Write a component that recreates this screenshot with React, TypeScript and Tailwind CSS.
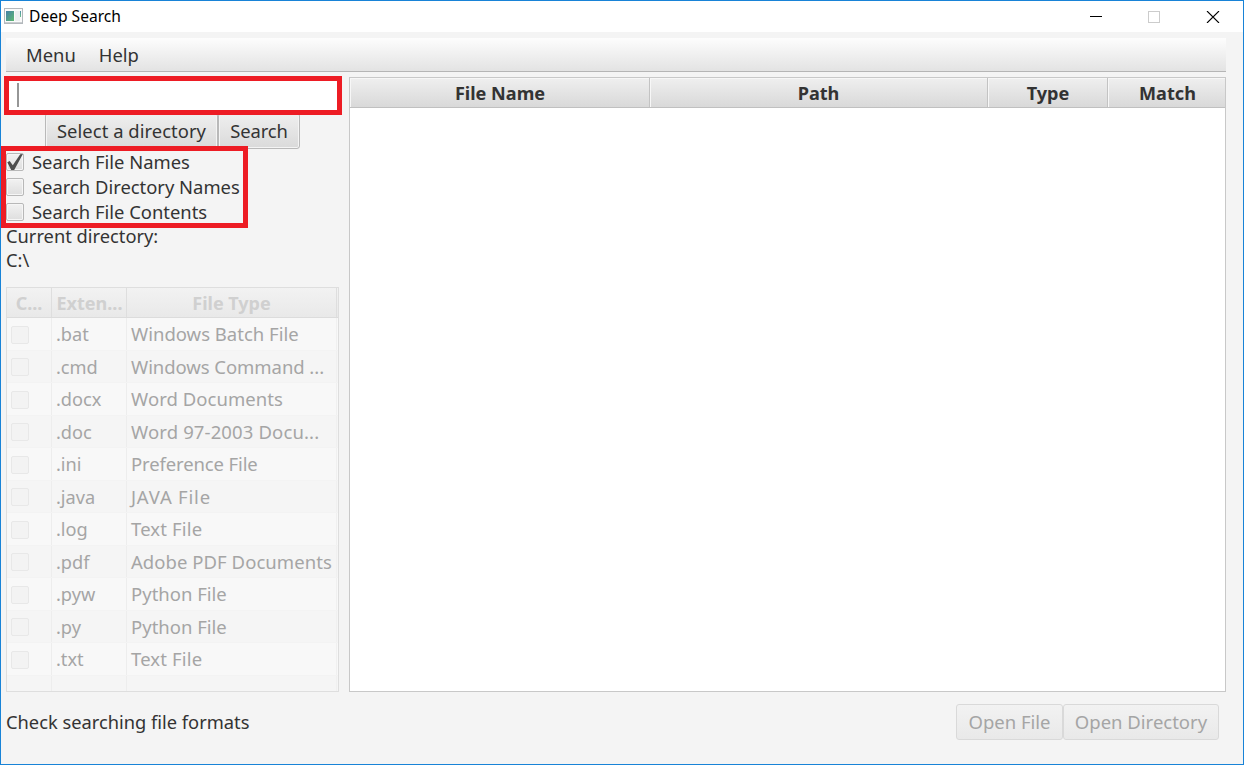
import React from "react";

const fileTypes = [
  { ext: ".bat", type: "Windows Batch File", fit: "" },
  { ext: ".cmd", type: "Windows Command ...", fit: "tracking-[-0.06px]" },
  { ext: ".docx", type: "Word Documents", fit: "tracking-[0.05px]" },
  { ext: ".doc", type: "Word 97-2003 Docu...", fit: "tracking-[0.13px]" },
  { ext: ".ini", type: "Preference File", fit: "tracking-[-0.13px]" },
  { ext: ".java", type: "JAVA File", fit: "tracking-[0.8px]" },
  { ext: ".log", type: "Text File", fit: "tracking-[0.15px]" },
  { ext: ".pdf", type: "Adobe PDF Documents", fit: "tracking-[0.05px]" },
  { ext: ".pyw", type: "Python File", fit: "" },
  { ext: ".py", type: "Python File", fit: "" },
  { ext: ".txt", type: "Text File", fit: "tracking-[0.15px]" },
];

function TitleBar() {
  return (
    <header className="flex h-[31px] shrink-0 items-center bg-white pl-[3px]">
      <svg width="19" height="16" viewBox="0 0 19 16" shapeRendering="crispEdges" className="mb-px">
        <defs>
          <linearGradient id="pane" x1="0" y1="0" x2="1" y2="1">
            <stop offset="0" stopColor="#4580a8" />
            <stop offset="1" stopColor="#5db870" />
          </linearGradient>
          <linearGradient id="strip" x1="0" y1="0" x2="0" y2="1">
            <stop offset="0" stopColor="#4c8fa8" />
            <stop offset="1" stopColor="#6cc08a" />
          </linearGradient>
        </defs>
        <rect x="0.5" y="0.5" width="18" height="15" fill="#fafafa" stroke="#b3b8bc" />
        <rect x="1" y="14" width="17" height="1" fill="#c9cdd0" />
        <rect x="2" y="3" width="8" height="10" fill="url(#pane)" />
        <rect x="11" y="3" width="5" height="10" fill="#eceef0" />
        <rect x="16" y="3" width="1" height="6" fill="url(#strip)" />
      </svg>
      <h1 className="mb-px ml-[6px] text-[15.6px] leading-[20px] text-black">Deep Search</h1>
      <div className="ml-auto flex items-center pr-[23px]">
        <svg width="130" height="12" viewBox="0 0 130 12" fill="none" className="block">
          <path d="M0 5.5H12" stroke="#000" />
          <rect x="58.5" y="0.5" width="11" height="11" stroke="#ccc" />
          <path d="M117 0L129 12M129 0L117 12" stroke="#000" strokeWidth="1.1" />
        </svg>
      </div>
    </header>
  );
}

function CheckBox({ label, checked = false }: { label: string; checked?: boolean }) {
  return (
    <label className="flex h-[25px] items-center">
      <span className="flex size-[18px] shrink-0 items-center justify-center rounded-[2px] border border-[#b8b8b8] bg-linear-to-b from-[#f2f2f2] to-[#dedede] shadow-[inset_0_0_0_1px_#f6f6f6]">
        {checked && (
          <svg width="18" height="18" viewBox="0 0 18 18" className="shrink-0">
            <path d="M1.3 9.2L3.7 8L6.8 12.3L14.2 1.2L16.9 1L8.2 17H5.2Z" fill="#4d4d4d" />
          </svg>
        )}
      </span>
      <span className="ml-[8px] leading-[25px] whitespace-nowrap">{label}</span>
    </label>
  );
}

function SearchPanel() {
  return (
    <section className="relative flex w-[333px] shrink-0 flex-col">
      <div className="flex h-[36px] w-[333px] items-center bg-white pl-[11px]">
        <span className="h-[24px] w-[2px] bg-[#969696]" />
      </div>
      <div className="flex h-[36px] pl-[39px]">
        <button className="h-full w-[173px] rounded-[3px] border border-[#b9b9b9] bg-linear-to-b from-[#efefef] to-[#dadada] tracking-[0.05px] whitespace-nowrap shadow-[inset_0_0_0_1px_#f4f4f4]">
          Select a directory
        </button>
        <button className="h-full w-[82px] rounded-[3px] border border-[#b9b9b9] bg-linear-to-b from-[#efefef] to-[#dadada] tracking-[-0.1px] shadow-[inset_0_0_0_1px_#f4f4f4]">
          Search
        </button>
      </div>
      <div className="flex flex-col">
        <CheckBox label="Search File Names" checked />
        <CheckBox label="Search Directory Names" />
        <CheckBox label="Search File Contents" />
      </div>
      <p className="h-[24px] text-[18.3px] leading-[24px]">Current directory:</p>
      <p className="h-[24px] text-[18.3px] leading-[24px]">C:\</p>
      <FileTypeTable />
      <div className="absolute -top-px -left-[2px] h-[39px] w-[338px] border-5 border-[#ed1c24]" />
      <div className="absolute top-[69px] -left-[5px] h-[82px] w-[247px] border-5 border-[#ed1c24]" />
    </section>
  );
}

function FileTypeTable() {
  return (
    <div className="mt-[15px] flex h-[405px] w-[333px] shrink-0 flex-col overflow-hidden border border-[#dedede] bg-[#f5f5f5] text-[#a5a5a5]">
      <div className="flex h-[30px] shrink-0 border-b border-[#dcdcdc] bg-linear-to-b from-[#f2f2f2] to-[#e9e9e9] text-center text-[18px] font-bold text-[#d0d0d0]">
        <div className="w-[45px] border-r border-[#dedede] leading-[30px]">C...</div>
        <div className="w-[75px] border-r border-[#dedede] pl-px leading-[30px]">Exten...</div>
        <div className="w-[210px] border-r border-[#dedede] leading-[30px]">File Type</div>
      </div>
      {fileTypes.map((row) => (
        <div key={row.ext} className="flex h-[32.5px] shrink-0 border-b border-[#f3f3f3] odd:bg-[#f5f5f5] even:bg-[#f8f8f8]">
          <div className="flex w-[45px] items-center border-r border-[#ededed] pt-[2px] pl-[4px]">
            <span className="size-[18px] rounded-[2px] border border-[#e8e8e8] bg-[#f3f3f3]" />
          </div>
          <div className="w-[75px] border-r border-[#ededed] pl-[4px] text-[18.2px] leading-[32px]">{row.ext}</div>
          <div className="w-[210px] border-r border-[#f0f0f0] pl-[4px] text-[18.5px] leading-[32px] whitespace-nowrap">
            <span className={row.fit}>{row.type}</span>
          </div>
        </div>
      ))}
      <div className="flex flex-1">
        <div className="w-[45px] border-r border-[#ededed]" />
        <div className="w-[75px] border-r border-[#ededed]" />
        <div className="w-[210px] border-r border-[#f0f0f0]" />
      </div>
    </div>
  );
}

function ResultsTable() {
  return (
    <section className="ml-[10px] flex h-[615px] w-[877px] flex-col border border-[#c8c8c8] bg-white">
      <div className="flex h-[30px] border-b border-[#c0c0c0] bg-linear-to-b from-[#efefef] to-[#d9d9d9] text-center text-[18.1px] leading-[30px] font-bold">
        <div className="w-[300px] border-r border-[#c3c3c3] pl-px shadow-[inset_1px_1px_0_#f7f7f7]">File Name</div>
        <div className="w-[338px] border-r border-[#c3c3c3] shadow-[inset_1px_1px_0_#f7f7f7]">Path</div>
        <div className="w-[120px] border-r border-[#c3c3c3] pl-px shadow-[inset_1px_1px_0_#f7f7f7]">Type</div>
        <div className="flex-1 pl-[2px] shadow-[inset_1px_1px_0_#f7f7f7]">Match</div>
      </div>
    </section>
  );
}

export default function App() {
  return (
    <div className="flex h-[765px] w-[1244px] flex-col overflow-hidden border border-[#1883d7] bg-[#f4f4f4] font-['Noto_Sans','Open_Sans',sans-serif] text-[18.4px] text-[#333]">
      <TitleBar />
      <nav className="mt-[6px] ml-[5px] flex h-[34px] w-[1220px] shrink-0 items-center gap-[23px] border-b border-[#b5b5b5] bg-linear-to-b from-[#fdfdfd] to-[#e3e3e3] pl-[20px] leading-[33px]">
        <span>Menu</span>
        <span>Help</span>
      </nav>
      <main className="mt-[5px] ml-[5px] flex h-[615px] shrink-0">
        <SearchPanel />
        <ResultsTable />
      </main>
      <footer className="mt-[12px] ml-[5px] flex h-[36px] w-[1213px] items-center">
        <p className="mr-auto text-[18.3px]">Check searching file formats</p>
        <button className="h-full w-[107px] rounded-[3px] border border-[#d9d9d9] bg-linear-to-b from-[#f2f2f2] to-[#e9e9e9] text-[18.5px] text-[#a5a5a5]">Open File</button>
        <button className="h-full w-[156px] rounded-[3px] border border-[#d9d9d9] bg-linear-to-b from-[#f2f2f2] to-[#e9e9e9] text-[18.5px] whitespace-nowrap text-[#a5a5a5]">Open Directory</button>
      </footer>
    </div>
  );
}
